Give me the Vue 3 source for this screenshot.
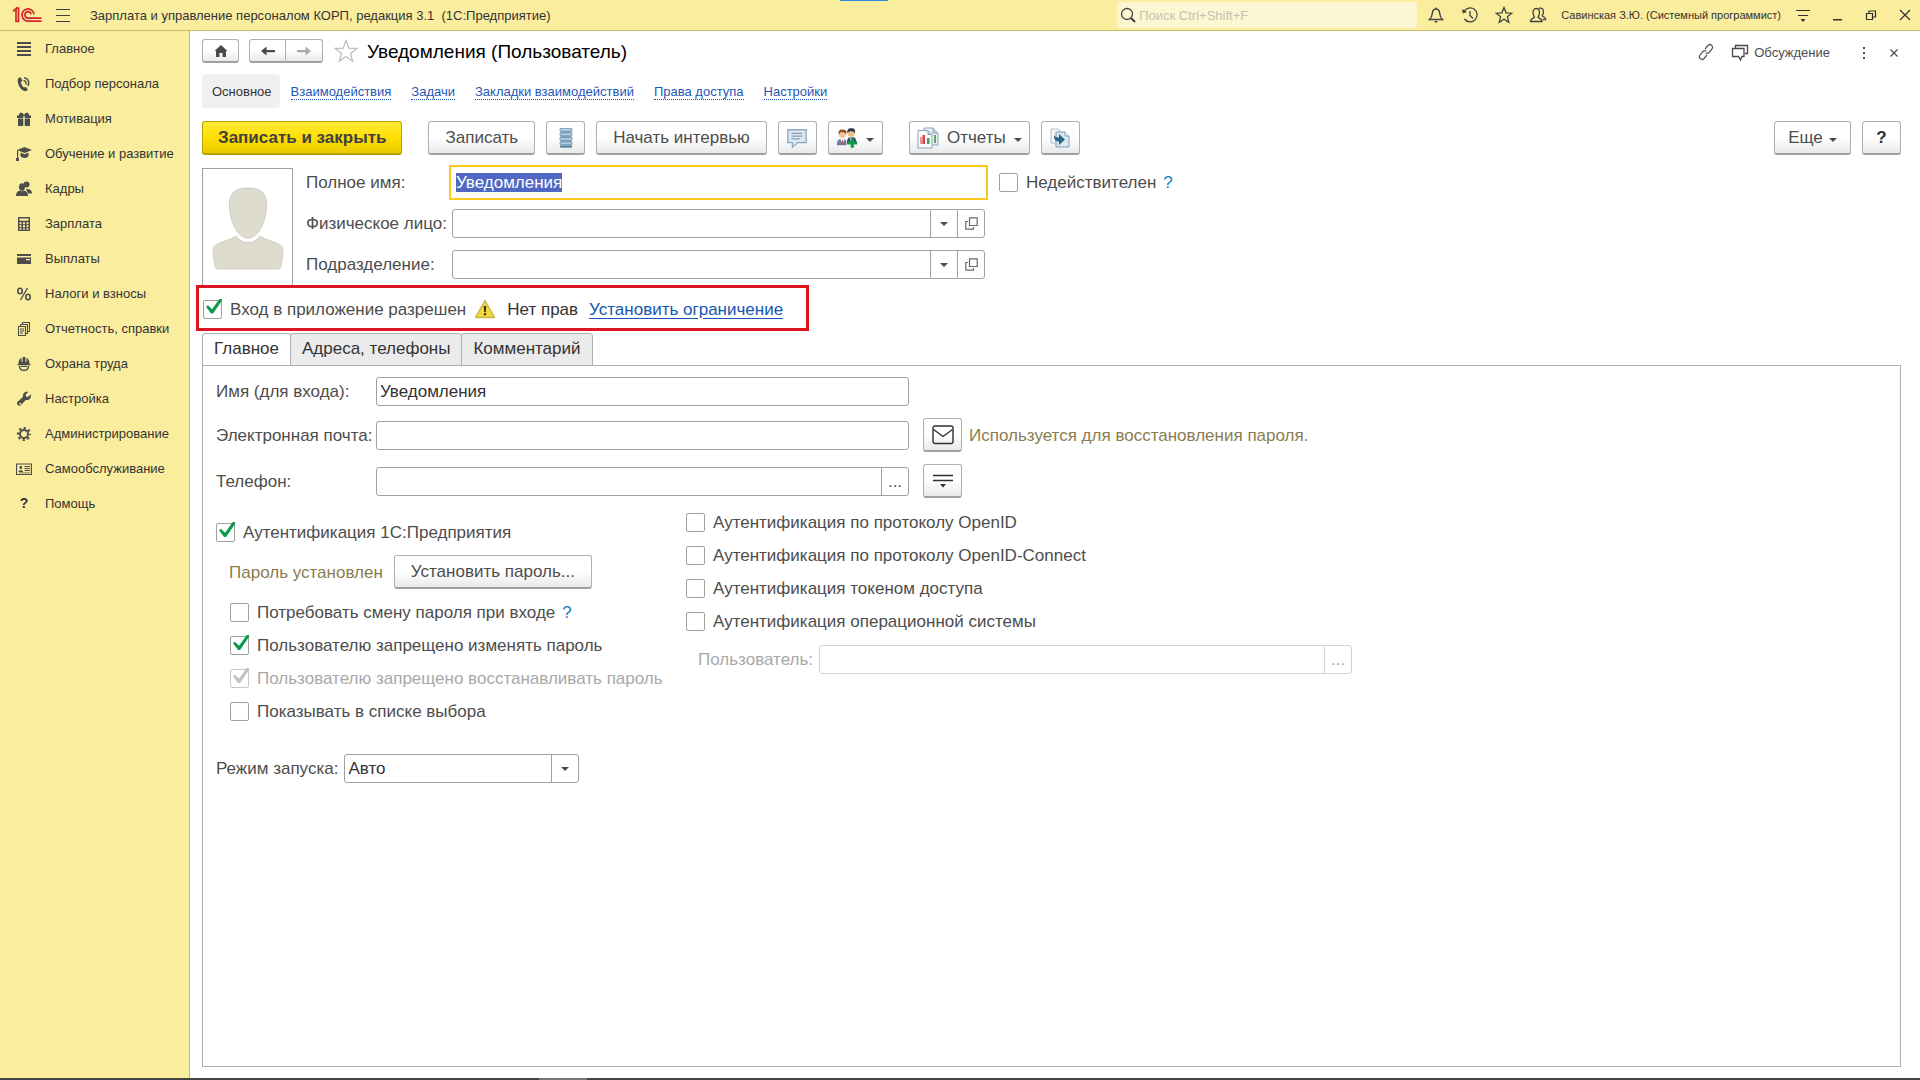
<script setup>
import { onMounted, ref } from "vue";

const sections = [
  { title: "Главное", icon: '<path d="M1 1h14v2H1zM1 5h14v2H1zM1 9h14v2H1zM1 13h14v2H1z"/>' },
  {
    title: "Подбор персонала",
    icon: '<path d="M2 2.500 4.500 1 6.500 4.500 5 6C5 8 6.500 10.500 8 11.500L10 11 12 14 9.500 15.300C5 15 .5 7.500 2 2.500z"/><path d="M7.500 4.500c2 .3 3 2 2.500 4M8 1.700c4 .3 6 4 4 8.300" fill="none" stroke="#4d4d4d" stroke-width="1.500"/>',
  },
  {
    title: "Мотивация",
    icon: '<path d="M1 4.500h6.300V7H1zM8.700 4.500H15V7H8.700zM2 7.500h5.300V15H2zM8.700 7.500H14V15H8.700z"/><path d="M3 5V3l1.500-1.500L6.500 2 8 3.800 9.500 2l2-.5L13 3v2z"/>',
  },
  {
    title: "Обучение и развитие",
    icon: '<path d="M1 4 8.500 1 16 4 8.500 7zM4.500 6.500l4 1.700 4-1.700V10c-1 2.500-7 2.500-8 0z"/><path d="M0 12h3v3H0zM1 4h1.200v9H1z"/>',
  },
  {
    title: "Кадры",
    icon: '<circle cx="10.500" cy="3.500" r="3"/><path d="M10 8c4-.5 6 1.500 6 4.500h-4z"/><ellipse cx="6" cy="6" rx="3" ry="3.700"/><path d="M0 15c0-4 2-5 4.300-5.500L6 10.500l1.700-1C10 10 12 11 12 15z"/>',
  },
  {
    title: "Зарплата",
    icon: '<path fill-rule="evenodd" d="M2 1h12v14H2zM3.500 2.500v2.300h9V2.500zM3.500 6.300v1.900h2V6.300zM7 6.300v1.900h2V6.300zM10.500 6.300v1.900h2V6.300zM3.500 9.300v1.900h2V9.300zM7 9.300v1.900h2V9.300zM10.500 9.300v1.900h2V9.300zM3.500 12.300v1.500h2v-1.500zM7 12.300v1.500h2v-1.500zM10.500 12.300v1.500h2v-1.500z"/>',
  },
  { title: "Выплаты", icon: '<path fill-rule="evenodd" d="M1 3h14v2H1zM1 6.500h14V13H1zM10 8v1.300h4V8z"/>' },
  {
    title: "Налоги и взносы",
    icon: '<g fill="none" stroke="#4d4d4d"><ellipse cx="4" cy="5" rx="2.200" ry="2.800" stroke-width="1.600"/><ellipse cx="12" cy="11" rx="2.200" ry="2.800" stroke-width="1.600"/><path d="M11.500 2l-7 12" stroke-width="1.400"/></g>',
  },
  {
    title: "Отчетность, справки",
    icon: '<g fill="none" stroke="#4d4d4d" stroke-width="1.100"><path d="M2.500 5.500h7v9h-7zM4.500 5V3.500h7v9H10M6.500 3V1.500h7v9H12M4 8h4M4 10h4M4 12h3"/></g>',
  },
  {
    title: "Охрана труда",
    icon: '<path d="M2.500 8C2.500 4 4 2.500 5.500 2v4h1V1h3v5h1V2C12 2.500 13.500 4 13.500 8H14.500v1.300h-13V8z"/><path d="M3.500 10c.5 6 8.500 6 9 0" fill="none" stroke="#4d4d4d" stroke-width="1.500"/><path d="M5 10h6v1H5z"/>',
  },
  {
    title: "Настройка",
    icon: '<path d="M14.700 3.200 12 6 10 5.500 9.700 3.600 12.300 1C9.500.2 6.500 2 7 5.700L1.500 11c-1.500 2 1 4.800 3.200 3.300L9.800 9c3 .7 6-1.800 4.900-5.800zM3.500 12a1 1 0 1 1-.1 1.400z"/>',
  },
  {
    title: "Администрирование",
    icon: '<g fill="none" stroke="#4d4d4d"><circle cx="8" cy="8" r="4" stroke-width="1.900"/><circle cx="8" cy="8" r="6" stroke-width="2.200" stroke-dasharray="2.200 2.512" stroke-dashoffset="1.100"/></g>',
  },
  {
    title: "Самообслуживание",
    icon: '<path d="M.5 3h15v10.500H.5z" fill="none" stroke="#4d4d4d" stroke-width="1.200"/><ellipse cx="4.800" cy="6.500" rx="1.300" ry="1.700"/><path d="M2.500 11c0-2.500 4.600-2.500 4.600 0zM8.500 5H14v1H8.500zM8.500 7H14v1H8.500zM8.500 9H14v1H8.500zM3 11.500h11v.8H3z"/>',
  },
  { title: "Помощь", glyph: "?" },
];

const links = ["Взаимодействия", "Задачи", "Закладки взаимодействий", "Права доступа", "Настройки"];

const fullName = ref("Уведомления");
const invalid = ref(false);
const person = ref("");
const department = ref("");
const loginAllowed = ref(true);

const tabs = ["Главное", "Адреса, телефоны", "Комментарий"];
const activeTab = ref("Главное");

const login = ref("Уведомления");
const email = ref("");
const phone = ref("");
const standardAuth = ref(true);
const launchMode = ref("Авто");

const passwordOptions = ref([
  { label: "Потребовать смену пароля при входе", checked: false, help: true },
  { label: "Пользователю запрещено изменять пароль", checked: true },
  { label: "Пользователю запрещено восстанавливать пароль", checked: true, disabled: true },
  { label: "Показывать в списке выбора", checked: false },
]);

const authOptions = ref([
  { label: "Аутентификация по протоколу OpenID", checked: false },
  { label: "Аутентификация по протоколу OpenID-Connect", checked: false },
  { label: "Аутентификация токеном доступа", checked: false },
  { label: "Аутентификация операционной системы", checked: false },
]);

const fullNameInput = ref(null);

onMounted(() => {
  fullNameInput.value.focus();
  fullNameInput.value.select();
});
</script>

<template>
  <div class="app">
    <header class="topbar">
      <svg class="logo" width="30" height="16" viewBox="0 0 30 16" fill="none" stroke="#d8232a" stroke-width="1.7">
        <path d="M1 4.500 4 1.500V15M4.500 1.200H6.500V15M3.200 14.500H7" />
        <path d="M22 7.500A6 6.200 0 1 0 16 14.200H29.500" />
        <path d="M19 7.500A3 3.300 0 1 0 16 11.200H29.500" />
      </svg>
      <button class="tool menu" aria-label="Меню">
        <svg width="16" height="14" viewBox="0 0 16 14" fill="#404040"><path d="M1 1h14v1H1zM1 7h14v1H1zM1 13h14v1H1z" /></svg>
      </button>
      <span class="app-title">Зарплата и управление персоналом КОРП, редакция 3.1&nbsp; (1С:Предприятие)</span>
      <span class="indicator"></span>
      <label class="search">
        <svg width="18" height="18" viewBox="0 0 18 18" fill="none" stroke="#404040"><circle cx="8" cy="8" r="5.5" stroke-width="1.3" /><path d="M12 12l4 4" stroke-width="2.2" /></svg>
        <input type="text" placeholder="Поиск Ctrl+Shift+F" aria-label="Поиск" />
      </label>
      <div class="tools">
        <button class="tool" aria-label="Оповещения">
          <svg width="18" height="18" viewBox="0 0 18 18" fill="none" stroke="#404040" stroke-width="1.3"><path d="M2.500 13.500c3-2.500 2.500-5 3-7.500C6 3.500 7.500 3 9 3s3 .5 3.500 3c.5 2.500 0 5 3 7.500zM9 3V1.500" /><path d="M7 15h4l-2 2z" fill="#404040" stroke="none" /></svg>
        </button>
        <button class="tool" aria-label="История">
          <svg width="18" height="18" viewBox="0 0 18 18" fill="none" stroke="#404040" stroke-width="1.3"><path d="M3 5.500A7 7 0 1 1 3.500 13M9 5v4.500l3 3" /><path d="M1 3l.8 4.500L6 6z" fill="#404040" stroke="none" /></svg>
        </button>
        <button class="tool" aria-label="Избранное">
          <svg width="18" height="18" viewBox="0 0 18 18" fill="none" stroke="#404040" stroke-width="1.3"><path d="M9 1.500l2.100 5.300 5.700.4-4.400 3.600 1.400 5.600L9 13.300l-4.800 3.100 1.400-5.600L1.200 7.200l5.700-.4z" /></svg>
        </button>
        <button class="tool" aria-label="Пользователи">
          <svg width="18" height="18" viewBox="0 0 18 18" fill="none" stroke="#404040" stroke-width="1.3"><path d="M1.500 15.500c0-3 2.500-3 4-4C5 10 4 9 4 6.500 4 4 5.500 2.500 7.300 2.500s3.200 1.500 3.200 4-1 3.500-1.500 5c1.500 1 4 1 4 4z" /><path d="M10 2.200c3-.7 4.500 1 4.500 3.500 0 2-.8 3-1.300 4.300 1.300.8 3.500 1 3.500 3.500h-3" /></svg>
        </button>
      </div>
      <span class="user">Савинская З.Ю. (Системный программист)</span>
      <div class="window-tools">
        <button class="tool" aria-label="Настройка панели">
          <svg width="16" height="16" viewBox="0 0 16 16" fill="#303030"><path d="M1 3h14v1H1zM3 8h10v1H3zM5.500 12h5L8 15z" /></svg>
        </button>
        <button class="tool" aria-label="Свернуть">
          <svg width="16" height="16" viewBox="0 0 16 16"><path d="M4 12h9v1.500H4z" fill="#303030" /></svg>
        </button>
        <button class="tool" aria-label="Восстановить">
          <svg width="16" height="16" viewBox="0 0 16 16" fill="none" stroke="#303030" stroke-width="1.2"><path d="M3.500 6.500h6v6h-6zM6 6V4h6.500v6H10" /></svg>
        </button>
        <button class="tool" aria-label="Закрыть">
          <svg width="16" height="16" viewBox="0 0 16 16" stroke="#303030" stroke-width="1.2"><path d="M3 3l10 10M13 3L3 13" /></svg>
        </button>
      </div>
    </header>

    <nav class="sidebar">
      <a v-for="section in sections" :key="section.title" href="#" class="section">
        <b v-if="section.glyph" class="section-glyph">{{ section.glyph }}</b>
        <svg v-else width="16" height="16" viewBox="0 0 16 16" fill="#4d4d4d" v-html="section.icon"></svg>
        <span>{{ section.title }}</span>
      </a>
    </nav>

    <main class="content">
      <div class="heading">
        <button class="btn btn-home" aria-label="Начальная страница">
          <svg width="16" height="14" viewBox="0 0 16 14" fill="#4a4a4a"><path d="M8 1l6.500 6H13v6H9.500V9h-3v4H3V7H1.500z" /></svg>
        </button>
        <div class="history">
          <button class="btn" aria-label="Назад">
            <svg width="16" height="12" viewBox="0 0 16 12" fill="#4a4a4a"><path d="M1 6l5.500-4.500V5H15v2.200H6.500v3.300z" /></svg>
          </button>
          <button class="btn" aria-label="Вперед">
            <svg width="16" height="12" viewBox="0 0 16 12" fill="#aaaaaa"><path d="M15 6L9.500 1.500V5H1v2.200h8.500v3.300z" /></svg>
          </button>
        </div>
        <button class="tool favorite" aria-label="Добавить в избранное">
          <svg width="24" height="24" viewBox="0 0 24 24" fill="none" stroke="#b4bcc4" stroke-width="1.2"><path d="M12 1.500l2.700 7.700 8.200.2-6.500 5 2.300 7.900L12 17.600l-6.700 4.700 2.300-7.900-6.500-5 8.200-.2z" /></svg>
        </button>
        <h1>Уведомления (Пользователь)</h1>
        <div class="heading-tools">
          <button class="tool" aria-label="Получить ссылку">
            <svg width="18" height="18" viewBox="0 0 18 18" fill="none" stroke="#5a5a5a" stroke-width="1.3"><path d="M8 6l3-3.500c2.500-2.500 6 1 3.800 3.600L12 9.500c-1 1-2.300 1-3.300.3M10 12l-3 3.500c-2.500 2.500-6-1-3.800-3.600L6 8.500c1-1 2.300-1 3.300-.3" /></svg>
          </button>
          <button class="tool discuss">
            <svg width="18" height="18" viewBox="0 0 18 18" fill="none" stroke="#4a4a4a" stroke-width="1.3"><path d="M1.500 5.500H13v8h-2L9.500 17l-2-3.500h-6zM4.500 5V2.500h12v8H14" /></svg>
            <span>Обсуждение</span>
          </button>
          <button class="tool" aria-label="Еще действия">
            <svg width="18" height="18" viewBox="0 0 18 18" fill="#4a4a4a"><path d="M8 4h2v2H8zM8 9h2v2H8zM8 14h2v2H8z" /></svg>
          </button>
          <button class="tool" aria-label="Закрыть форму">
            <svg width="10" height="10" viewBox="0 0 10 10" stroke="#4a4a4a" stroke-width="1.2"><path d="M1.500 2.500l7 7M8.500 2.500l-7 7" /></svg>
          </button>
        </div>
      </div>

      <nav class="form-nav">
        <span class="form-nav-current">Основное</span>
        <a v-for="link in links" :key="link" href="#">{{ link }}</a>
      </nav>

      <div class="toolbar">
        <button class="btn btn-primary">Записать и закрыть</button>
        <button class="btn btn-text group-start">Записать</button>
        <button class="btn btn-icon" aria-label="Движения документа">
          <svg width="14" height="22" viewBox="0 0 14 22"><path d="M1.500 2h11v18.500h-11z" fill="#86a6bf" /><path d="M1 1.500h12v2.800H1zM1 6h12v2.800H1zM1 10.500h12v2.800H1zM1 15h12v2.800H1z" fill="#b4cde0" stroke="#6c8fab" stroke-width=".7" /><path d="M1 19h12v1.500H1z" fill="#5c7f9c" /></svg>
        </button>
        <button class="btn btn-text">Начать интервью</button>
        <button class="btn btn-icon" aria-label="Комментарии">
          <svg width="22" height="22" viewBox="0 0 24 22"><path d="M2 2h20v14h-9l-6 5v-5H2z" fill="#dce9f3" stroke="#8ba6bd" stroke-width="1.4" /><path d="M6 6h12M6 9h12M6 12h9" stroke="#8b9dad" stroke-width="1.2" /></svg>
        </button>
        <button class="btn btn-users" aria-label="Добавить пользователей">
          <svg width="22" height="22" viewBox="0 0 24 22"><path d="M1 19c0-5 1-7 5.500-7s5 2 5 7z" fill="#6582ac" /><path d="M5 12h4l-2 6z" fill="#fff" /><path d="M7 12l-1 5 1 2 1-2z" fill="#d8432f" /><circle cx="7" cy="7" r="4" fill="#f2c794" /><path d="M2.800 7C2 2 6 1 8 2c3-.5 4 2 3.200 5C10 5 8 5 6.500 4.500 5 5 4 5.500 2.800 7z" fill="#89521f" /><path d="M12 17c0-5 1-7 5-7s5 2 5 7z" fill="#343e60" /><path d="M14.500 10.500h4l-2 5z" fill="#fff" /><circle cx="16.500" cy="5.500" r="4" fill="#f0be85" /><path d="M12.300 5.500C11.500 1 15 0 17 .5c3-.3 4.500 2 3.700 5-1-1.700-3-2-4.700-2-1.500.3-2.700.8-3.700 2z" fill="#303849" /><path d="M16 11h3.500v3.500H23V18h-3.500v3.500H16V18h-3.500v-3.500H16z" fill="#129a4b" /></svg>
          <i class="caret caret-low"></i>
        </button>
        <button class="btn btn-reports group-start">
          <svg width="22" height="22" viewBox="0 0 22 22"><path d="M7 1h9l5 5v12H7z" fill="#e8f1f7" stroke="#8ba4b7" /><path d="M16 1v5h5" fill="#bfd1df" stroke="#8ba4b7" /><path d="M17 8h2v8h-2z" fill="#61a561" /><path d="M1 3.500h10l4 4V21H1z" fill="#f7fbfd" stroke="#8ba4b7" /><path d="M11 3.500v4h4" fill="#bfd1df" stroke="#8ba4b7" /><path d="M3 10h2.500v7H3z" fill="#e99a98" /><path d="M5.500 8H8v9H5.500z" fill="#e2453d" /><path d="M10 11h2.500v6H10z" fill="#49a04c" /></svg>
          <span>Отчеты</span>
          <i class="caret caret-low"></i>
        </button>
        <button class="btn btn-icon" aria-label="Перенести">
          <svg width="20" height="20" viewBox="0 0 20 20"><path d="M1 1h7l3 3v11H1z" fill="#f4f4f4" stroke="#b5bec6" /><path d="M6 4h9l4 4v11H6z" fill="#dbe8f1" stroke="#809db3" /><path d="M15 4v4h4" fill="#fff" stroke="#809db3" /><path d="M4 7c1 2 3 2.500 5 2.500V6l6 5.500-6 5.500v-3.500c-3.500 0-5-2-5-6.500z" fill="#2f6489" /></svg>
        </button>
        <button class="btn btn-more"><span>Еще</span><i class="caret caret-low"></i></button>
        <button class="btn btn-icon btn-help">?</button>
      </div>

      <div class="card">
        <div class="photo">
          <svg width="72" height="84" viewBox="0 0 72 84" fill="#dedccf" stroke="#cfcdbf" stroke-width="1">
            <path d="M36 1c13 0 19 5 18.500 18C54 36 46 51 36 51S18 36 17.500 19C17 6 23 1 36 1z" />
            <path d="M24 49c6 9 18 9 24 0 4 4 23 7 23 13-.5 8-1 13-2 17-.5 2-1 3-4 3H7c-3 0-3.500-1-4-3-1-4-1.500-9-2-17 0-6 19-9 23-13z" />
          </svg>
        </div>
        <div class="card-fields">
          <label for="full-name">Полное имя:</label>
          <div class="field field-active">
            <input id="full-name" ref="fullNameInput" v-model="fullName" type="text" />
          </div>
          <div class="invalid">
            <label class="check"><input v-model="invalid" type="checkbox" /><span>Недействителен</span></label>
            <a href="#" class="help">?</a>
          </div>
          <label for="person" class="first-column">Физическое лицо:</label>
          <div class="field">
            <input id="person" v-model="person" type="text" />
            <button class="field-btn" aria-label="Выбрать"><i class="caret"></i></button>
            <button class="field-btn" aria-label="Открыть">
              <svg width="13" height="13" viewBox="0 0 13 13" fill="none" stroke="#6a6a6a" stroke-width="1.2"><path d="M4.500 .8h7.700v7.700H4.500zM3 4.500H.8v7.700h7.700V10" /></svg>
            </button>
          </div>
          <label for="department" class="first-column">Подразделение:</label>
          <div class="field">
            <input id="department" v-model="department" type="text" />
            <button class="field-btn" aria-label="Выбрать"><i class="caret"></i></button>
            <button class="field-btn" aria-label="Открыть">
              <svg width="13" height="13" viewBox="0 0 13 13" fill="none" stroke="#6a6a6a" stroke-width="1.2"><path d="M4.500 .8h7.700v7.700H4.500zM3 4.500H.8v7.700h7.700V10" /></svg>
            </button>
          </div>
        </div>
      </div>

      <div class="access">
        <label class="check"><input v-model="loginAllowed" type="checkbox" /><span>Вход в приложение разрешен</span></label>
        <svg width="22" height="20" viewBox="0 0 22 20"><path d="M11 1.500L20.500 18.500h-19z" fill="#f0d835" stroke="#c9b44c" stroke-width="1.4" stroke-linejoin="round" /><path d="M9.700 7h2.600l-.5 6h-1.600zM9.900 14h2.200v2.300H9.900z" fill="#3a3410" /></svg>
        <span class="no-rights">Нет прав</span>
        <a href="#" class="restrict">Установить ограничение</a>
      </div>

      <div class="tabs" role="tablist">
        <button
          v-for="tab in tabs"
          :key="tab"
          role="tab"
          class="tab"
          :class="{ 'tab-active': tab === activeTab }"
          :aria-selected="tab === activeTab"
          @click="activeTab = tab"
        >{{ tab }}</button>
      </div>

      <section class="panel">
        <div class="contacts">
          <div class="contact-row">
            <label for="login">Имя (для входа):</label>
            <div class="field"><input id="login" v-model="login" type="text" /></div>
          </div>
          <div class="contact-row">
            <label for="email">Электронная почта:</label>
            <div class="field"><input id="email" v-model="email" type="text" /></div>
            <button class="btn btn-icon" aria-label="Написать письмо">
              <svg width="22" height="20" viewBox="0 0 22 20" fill="none" stroke="#303030" stroke-width="1.4"><rect x="1" y="1" width="20" height="17.500" rx="2" /><path d="M1.500 4.500l9.500 7 9.500-7" /></svg>
            </button>
            <span class="hint">Используется для восстановления пароля.</span>
          </div>
          <div class="contact-row">
            <label for="phone">Телефон:</label>
            <div class="field">
              <input id="phone" v-model="phone" type="text" />
              <button class="field-btn" aria-label="Изменить телефон">...</button>
            </div>
            <button class="btn btn-icon" aria-label="Дополнительно">
              <svg width="22" height="16" viewBox="0 0 22 16" stroke="#303030" stroke-width="1.5"><path d="M1 2.500h20M1 7.500h20" /><path d="M8 11h6l-3 3.500z" fill="#303030" stroke="none" /></svg>
            </button>
          </div>
        </div>

        <div class="auth">
          <div class="auth-own">
            <label class="check"><input v-model="standardAuth" type="checkbox" /><span>Аутентификация 1С:Предприятия</span></label>
            <div class="password">
              <span class="hint">Пароль установлен</span>
              <button class="btn btn-text">Установить пароль...</button>
            </div>
            <div class="options">
              <div v-for="option in passwordOptions" :key="option.label" class="option">
                <label class="check">
                  <input v-model="option.checked" type="checkbox" :disabled="option.disabled" />
                  <span>{{ option.label }}</span>
                </label>
                <a v-if="option.help" href="#" class="help">?</a>
              </div>
            </div>
          </div>
          <div class="auth-other">
            <label v-for="option in authOptions" :key="option.label" class="check">
              <input v-model="option.checked" type="checkbox" /><span>{{ option.label }}</span>
            </label>
            <div class="os-user">
              <label for="os-user">Пользователь:</label>
              <div class="field field-disabled">
                <input id="os-user" type="text" disabled />
                <button class="field-btn" disabled aria-label="Выбрать пользователя">...</button>
              </div>
            </div>
          </div>
        </div>

        <div class="launch">
          <label for="launch">Режим запуска:</label>
          <div class="select">
            <select id="launch" v-model="launchMode">
              <option>Авто</option>
            </select>
            <span class="select-arrow"><i class="caret"></i></span>
          </div>
        </div>
      </section>
    </main>

    <footer class="taskbar"><span class="taskbar-active"></span></footer>
  </div>
</template>

<style>
body {
  margin: 0;
  background: #fff;
}
</style>

<style scoped>
.app {
  display: grid;
  grid-template: 31px 1fr 2px / 190px 1fr;
  min-height: 100vh;
  font-family: "Liberation Sans", Arial, sans-serif;
  font-size: 17px;
  line-height: 19px;
  color: #4d4d4d;
}

.app * {
  box-sizing: border-box;
}

button,
input,
select {
  font: inherit;
  color: inherit;
  margin: 0;
}

svg {
  display: block;
  flex-shrink: 0;
}

.topbar {
  grid-column: 1 / -1;
  position: relative;
  display: flex;
  align-items: center;
  padding: 0 7px 0 12px;
  background: #fbed9e;
  border-bottom: 1px solid #c8b96a;
  font-size: 13px;
  color: #333;
}

.tool {
  display: flex;
  align-items: center;
  justify-content: center;
  padding: 0;
  border: 0;
  background: none;
}

.menu {
  margin-left: 13px;
}

.app-title {
  margin-left: 19px;
}

.indicator {
  position: absolute;
  top: 0;
  left: 840px;
  width: 48px;
  height: 1px;
  background: #2b8be0;
}

.search {
  display: flex;
  align-items: center;
  width: 300px;
  height: 26px;
  margin-left: auto;
  padding-left: 2px;
  border-radius: 3px;
  background: #fdf6d2;
}

.search input {
  flex: 1;
  min-width: 0;
  padding: 0 2px;
  border: 0;
  outline: 0;
  background: none;
}

.search input::placeholder {
  color: #c4c2b4;
}

.tools {
  display: flex;
  gap: 16px;
  margin-left: 10px;
}

.user {
  margin-left: 14px;
  font-size: 11px;
}

.window-tools {
  display: flex;
  gap: 18px;
  margin-left: 14px;
}

.sidebar {
  background: #fbed9e;
  border-right: 1px solid #c8b96a;
}

.section {
  display: flex;
  align-items: center;
  gap: 13px;
  height: 35px;
  padding-left: 16px;
  font-size: 13px;
  color: #333;
  text-decoration: none;
}

.section-glyph {
  width: 16px;
  font-size: 14px;
  text-align: center;
}

.content {
  display: flex;
  flex-direction: column;
  padding: 8px 19px 11px 12px;
}

.btn {
  display: flex;
  align-items: center;
  justify-content: center;
  height: 34px;
  padding: 0;
  border: 1px solid #b0b0b0;
  border-bottom: 2px solid #a0a0a0;
  border-radius: 3px;
  background: linear-gradient(#fff 50%, #e9e9e9);
}

.btn-text {
  padding: 0 16px;
}

.btn-icon {
  width: 39px;
}

.heading {
  display: flex;
  align-items: center;
}

.btn-home {
  width: 37px;
  height: 24px;
}

.history {
  display: flex;
  margin-left: 10px;
}

.history .btn {
  width: 37px;
  height: 24px;
}

.history .btn:first-child {
  border-radius: 3px 0 0 3px;
}

.history .btn:last-child {
  border-left: 0;
  border-radius: 0 3px 3px 0;
}

.favorite {
  margin: 0 9px 0 11px;
}

h1 {
  margin: 0;
  padding-top: 2px;
  font-size: 19px;
  font-weight: 400;
  line-height: 22px;
  color: #000;
}

.heading-tools {
  display: flex;
  align-items: center;
  gap: 16px;
  margin-left: auto;
  padding: 2px 2px 0 0;
  font-size: 13px;
}

.discuss {
  gap: 5px;
  padding-right: 9px;
}

.form-nav {
  display: flex;
  align-items: center;
  gap: 20px;
  margin-top: 11px;
  font-size: 13px;
  line-height: 16px;
}

.form-nav-current {
  margin-right: -9px;
  padding: 10px 8px 8px 10px;
  border-radius: 4px;
  background: #f0f0f0;
  color: #333;
}

.form-nav a {
  padding-top: 2px;
  border-bottom: 1px dotted #1f57b5;
  line-height: 14px;
  color: #1f57b5;
  text-decoration: none;
}

.toolbar {
  display: flex;
  gap: 11px;
  margin-top: 13px;
}

.group-start {
  margin-left: 15px;
}

.btn-primary {
  padding: 0 15px;
  border-color: #b8a000;
  background: linear-gradient(#ffe93a, #ffe000 50%, #e8ca00);
  font-weight: 700;
  color: #404040;
}

.caret {
  border: 4px solid transparent;
  border-top-color: #4a4a4a;
  border-bottom: 0;
}

.caret-low {
  margin-top: 4px;
}

.btn-users {
  gap: 8px;
  width: 55px;
}

.btn-reports {
  gap: 8px;
  width: 121px;
}

.btn-more {
  gap: 6px;
  width: 77px;
  margin-left: auto;
}

.btn-help {
  font-weight: 700;
  color: #303030;
}

.card {
  display: flex;
  margin-top: 13px;
}

.photo {
  display: flex;
  justify-content: center;
  width: 91px;
  height: 117px;
  padding-top: 18px;
  border: 1px solid #a0a0a0;
  border-bottom: 0;
}

.card-fields {
  display: grid;
  grid-template-columns: 146px 533px auto;
  grid-auto-rows: 29px;
  row-gap: 12px;
  align-items: center;
  margin-left: 13px;
}

.first-column {
  grid-column: 1;
}

.field {
  display: flex;
  width: 533px;
  height: 29px;
  border: 1px solid #a0a0a0;
  border-radius: 3px;
  background: #fff;
}

.field input {
  flex: 1;
  min-width: 0;
  padding: 0 3px;
  border: 0;
  outline: 0;
  background: none;
  line-height: 19px;
  color: #333;
}

.field input::selection {
  background: #5068c4;
  color: #fff;
}

.field-active {
  border-color: #fff;
  border-radius: 0;
  outline: 2px solid #fcca18;
  outline-offset: 1px;
}

.field-btn {
  display: flex;
  align-items: center;
  justify-content: center;
  width: 27px;
  padding: 0;
  border: 0;
  border-left: 1px solid #a0a0a0;
  background: none;
}

.field-disabled,
.field-disabled .field-btn {
  border-color: #d4d4d4;
}

.check {
  display: flex;
  align-items: center;
  gap: 8px;
}

.check input {
  appearance: none;
  flex-shrink: 0;
  position: relative;
  width: 19px;
  height: 19px;
  border: 1px solid #a0a0a0;
  border-radius: 2px;
  background: #fff;
}

.check input:checked::before {
  content: "";
  position: absolute;
  top: -2px;
  left: 2px;
  width: 16px;
  height: 15px;
  background: #0a9a4a;
  clip-path: polygon(0 55%, 12% 45%, 38% 72%, 86% 0, 100% 0, 100% 14%, 44% 100%, 32% 100%);
}

.check input:disabled {
  border-color: #c8c8c8;
}

.check input:disabled::before {
  background: #c0c0c0;
}

.check input:disabled + span {
  color: #a8a8a8;
}

.invalid {
  display: flex;
  gap: 7px;
  margin-left: 14px;
}

.help {
  color: #1878c0;
  text-decoration: none;
}

.access {
  display: flex;
  align-items: center;
  align-self: flex-start;
  width: 613px;
  height: 46px;
  margin-left: -6px;
  padding: 2px 0 0 4px;
  border: 3px solid #db161e;
}

.access svg {
  margin: 0 11px 0 8px;
}

.no-rights {
  color: #333;
}

.restrict {
  margin-left: 11px;
  color: #1556b4;
  text-underline-offset: 3px;
}

.tabs {
  display: flex;
  margin: 2px 0 -1px;
}

.tab {
  height: 33px;
  padding: 0 11px 3px;
  border: 1px solid #b0b0b0;
  border-radius: 3px 3px 0 0;
  background: #ebebeb;
  color: #333;
}

.tab + .tab {
  margin-left: -1px;
}

.tab-active {
  border-bottom-color: #fff;
  background: #fff;
}

.panel {
  flex: 1;
  padding: 11px 13px;
  border: 1px solid #b0b0b0;
}

.contact-row {
  display: flex;
  align-items: center;
}

.contact-row + .contact-row {
  margin-top: 12px;
}

.contact-row label {
  width: 160px;
}

.contact-row .btn {
  margin-left: 14px;
}

.contact-row .hint {
  margin-left: 7px;
}

.hint {
  color: #8a7c50;
}

.auth {
  display: flex;
  margin-top: 15px;
}

.auth-own {
  width: 470px;
  padding-top: 10px;
}

.password {
  display: flex;
  align-items: center;
  gap: 11px;
  margin: 13px 0 14px 13px;
}

.options {
  display: grid;
  gap: 14px;
  margin-left: 14px;
}

.option {
  display: flex;
  gap: 7px;
}

.auth-other {
  display: flex;
  flex-direction: column;
  gap: 14px;
}

.os-user {
  display: flex;
  align-items: center;
  gap: 6px;
  margin-left: 12px;
  color: #a8a8a8;
}

.os-user .field-btn {
  color: #a8a8a8;
}

.launch {
  display: flex;
  align-items: center;
  gap: 6px;
  margin-top: 33px;
}

.select {
  position: relative;
  width: 235px;
}

.select select {
  appearance: none;
  display: block;
  width: 100%;
  height: 29px;
  padding: 0 3px;
  border: 1px solid #a0a0a0;
  border-radius: 3px;
  background: #fff;
  color: #333;
}

.select-arrow {
  position: absolute;
  top: 1px;
  right: 1px;
  bottom: 1px;
  display: flex;
  align-items: center;
  justify-content: center;
  width: 27px;
  border-left: 1px solid #a0a0a0;
  pointer-events: none;
}

.taskbar {
  grid-column: 1 / -1;
  display: flex;
  background: #444;
}

.taskbar-active {
  width: 48px;
  margin-left: 539px;
  background: #777;
}
</style>
